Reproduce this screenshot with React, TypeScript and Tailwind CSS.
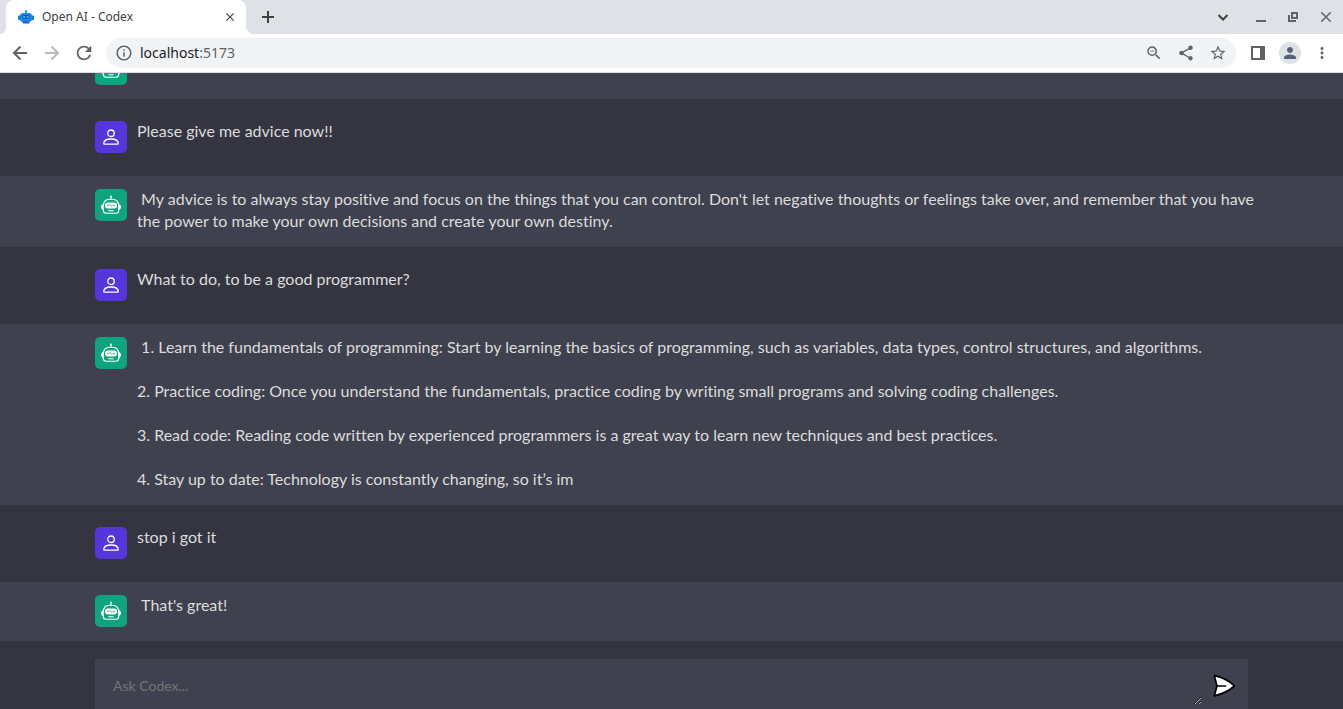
import React from "react";
import {
  MdClose,
  MdInfoOutline,
  MdMoreVert,
  MdPerson,
  MdRefresh,
  MdShare,
  MdStarBorder,
  MdOutlineZoomOut,
} from "react-icons/md";

type Message = { from: "bot" | "user"; text: string };

const messages: Message[] = [
  { from: "bot", text: "" },
  { from: "user", text: "Please give me advice now!!" },
  {
    from: "bot",
    text: " My advice is to always stay positive and focus on the things that you can control. Don't let negative thoughts or feelings take over, and remember that you have the power to make your own decisions and create your own destiny.",
  },
  { from: "user", text: "What to do, to be a good programmer?" },
  {
    from: "bot",
    text: " 1. Learn the fundamentals of programming: Start by learning the basics of programming, such as variables, data types, control structures, and algorithms.\n\n2. Practice coding: Once you understand the fundamentals, practice coding by writing small programs and solving coding challenges.\n\n3. Read code: Reading code written by experienced programmers is a great way to learn new techniques and best practices.\n\n4. Stay up to date: Technology is constantly changing, so it’s im",
  },
  { from: "user", text: "stop i got it" },
  { from: "bot", text: " That's great!" },
];

function LineIcon({ d, color }: { d: string; color: string }) {
  return (
    <svg viewBox="0 0 20 20" className="size-5" fill="none" stroke={color} strokeWidth="2" aria-hidden="true">
      <path d={d} />
    </svg>
  );
}

function Favicon() {
  return (
    <svg viewBox="0 0 32 28" className="h-3.5 w-4 shrink-0" aria-hidden="true">
      <rect x="14.5" y="1" width="3" height="7" fill="#1e88e5" />
      <circle cx="16" cy="2.5" r="2.5" fill="#29b6f6" />
      <rect x="0" y="11" width="6" height="9" rx="2" fill="#1976d2" />
      <rect x="26" y="11" width="6" height="9" rx="2" fill="#1976d2" />
      <rect x="4" y="6" width="24" height="18" rx="6" fill="#1e88e5" />
      <rect x="8" y="10" width="16" height="8" rx="4" fill="#0d5bb8" />
      <circle cx="12.5" cy="14" r="2.2" fill="#4fc3f7" />
      <circle cx="19.5" cy="14" r="2.2" fill="#4fc3f7" />
      <rect x="9" y="23" width="14" height="4" rx="2" fill="#1565c0" />
    </svg>
  );
}

function BotIcon() {
  return (
    <svg viewBox="0 0 40 40" className="size-5" fill="none" aria-hidden="true">
      <circle cx="20" cy="3" r="2" fill="#fff" />
      <path d="M20 3v6" stroke="#fff" strokeWidth="2" />
      <path
        d="M4.5 22C5 13 10 8.500 17 8.500h6c7 0 12 4.500 12.500 13.500v8c0 4-2.500 6.500-6.500 6.500H11c-4 0-6.500-2.500-6.500-6.500z"
        stroke="#fff"
        strokeWidth="2.400"
      />
      <path d="M4 18.500c-2.500.5-4 2.500-4 5.500s1.500 5 4 5.500zM36 18.500c2.500.5 4 2.500 4 5.500s-1.500 5-4 5.500z" fill="#fff" />
      <rect x="8" y="15" width="24" height="12" rx="5.500" fill="#fff" />
      <path d="M12 20.500h4.500l2-1.500 3 4 2-2h4.500" stroke="#10a37f" strokeWidth="1.500" />
      <path d="M15.500 31.500h9" stroke="#fff" strokeWidth="2" strokeLinecap="round" />
    </svg>
  );
}

function UserIcon() {
  return (
    <svg viewBox="0 0 40 40" className="size-5" fill="none" stroke="#fff" strokeWidth="2.600" aria-hidden="true">
      <circle cx="20" cy="12.500" r="6.500" />
      <path d="M5.500 33c0-5.500 6-9 14.500-9s14.500 3.500 14.500 9c0 .8-.5 1.200-1.300 1.200H6.800c-.8 0-1.300-.4-1.300-1.200z" />
    </svg>
  );
}

function SendIcon() {
  return (
    <svg viewBox="0 0 24 24" className="size-6" fill="#fff" stroke="#000" strokeWidth="1.700" strokeLinejoin="round" strokeLinecap="round" aria-hidden="true">
      <path d="M2.300 1.700c7.700 1.500 14.700 5 20.200 10.300C17 16.800 10 20.300 2.300 21.800L5 12z" />
      <path d="M5 12h8.500" />
    </svg>
  );
}

function Browser() {
  return (
    <header className="shrink-0 border-b border-[#dcdee0] bg-white font-['Noto_Sans',sans-serif] text-[#5f6368]">
      <div className="flex h-[34px] items-stretch bg-[#dee1e6]">
        <div className="w-1.5 bg-white">
          <div className="h-full rounded-br-lg bg-[#dee1e6]" />
        </div>
        <div className="flex w-60 items-center rounded-t-lg bg-white pr-2 pl-3">
          <Favicon />
          <span className="ml-2 flex-1 text-xs text-[#3c4043]">Open AI - Codex</span>
          <button aria-label="Close tab" className="flex size-4 items-center justify-center">
            <MdClose size={14} color="#3c4043" stroke="#3c4043" />
          </button>
        </div>
        <div className="flex-1 bg-white">
          <div className="flex h-full items-center rounded-bl-lg bg-[#dee1e6] pl-3 text-[#3c4043]">
            <button aria-label="New tab">
              <LineIcon d="M4 10h12M10 4v12" color="#3c4043" />
            </button>
            <div className="ml-auto flex items-center gap-4 pr-2">
              <button aria-label="Search tabs" className="mr-1">
                <LineIcon d="m5.500 8 4.500 4.500L14.500 8" color="#3c4043" />
              </button>
              <button aria-label="Minimize">
                <svg viewBox="0 0 16 16" className="size-4"><path d="M3 11h10v2H3z" fill="#5f6368" /></svg>
              </button>
              <button aria-label="Restore">
                <svg viewBox="0 0 16 16" className="size-4" fill="none" stroke="#5f6368" strokeWidth="2">
                  <path d="M7 4h5v5H7zM4 6v6h7" />
                </svg>
              </button>
              <button aria-label="Close window">
                <MdClose size={18} color="#5f6368" stroke="#5f6368" />
              </button>
            </div>
          </div>
        </div>
      </div>
      <div className="flex h-[38px] items-center pr-3 pl-2.5">
        <div className="flex items-center gap-3">
          <button aria-label="Back"><LineIcon d="M17 10H4.500M10.500 3.500 4 10l6.500 6.500" color="#5f6368" /></button>
          <button aria-label="Forward"><LineIcon d="M3 10h12.500M9.500 3.500 16 10l-6.500 6.500" color="#babcbe" /></button>
          <button aria-label="Reload"><MdRefresh size={20} viewBox="1 1 22 22" /></button>
        </div>
        <div className="ml-3 flex h-[30px] flex-1 items-center rounded-full bg-[#f1f3f4] px-[9px]">
          <MdInfoOutline size={18} />
          <p className="ml-[7px] flex-1 text-sm">
            <span className="text-[#202124]">localhost</span>:5173
          </p>
          <div className="flex items-center gap-3.5">
            <button aria-label="Zoom"><MdOutlineZoomOut size={18} /></button>
            <button aria-label="Share"><MdShare size={18} /></button>
            <button aria-label="Bookmark"><MdStarBorder size={18} /></button>
          </div>
        </div>
        <button aria-label="Side panel" className="ml-3.5">
          <svg viewBox="0 0 16 16" className="size-4"><path d="M1 1h14v14H1zm2 2v10h7V3z" fill="#5f6368" fillRule="evenodd" /></svg>
        </button>
        <button aria-label="Profile" className="ml-[13px] flex size-[22px] items-center justify-center rounded-full bg-[#dee1e6]">
          <MdPerson size={18} color="#56627a" />
        </button>
        <button aria-label="Menu" className="ml-3"><MdMoreVert size={18} /></button>
      </div>
    </header>
  );
}

function Row({ from, text }: Message) {
  const bot = from === "bot";
  return (
    <div className={bot ? "shrink-0 bg-[#40414f] pt-[13px] pb-3.5" : "shrink-0 bg-[#343541] pt-[22px] pb-[23px]"}>
      <div className="mx-auto flex max-w-[1153px] items-start gap-2.5">
        <div
          className={
            bot
              ? "flex size-8 shrink-0 items-center justify-center rounded-[5px] bg-[#10a37f]"
              : "flex size-8 shrink-0 items-center justify-center rounded-[5px] bg-[#5436da]"
          }
        >
          {bot ? <BotIcon /> : <UserIcon />}
        </div>
        <p className="-mt-px -mr-4 flex-1 pb-px text-base leading-[22px] whitespace-pre-wrap text-[#dcdcdc] [font-variant-ligatures:none]">
          {text}
        </p>
      </div>
    </div>
  );
}

export default function App() {
  return (
    <div className="flex h-screen flex-col overflow-hidden bg-[#343541] font-['Lato',sans-serif]">
      <Browser />
      <main className="flex min-h-0 flex-1 flex-col">
        <div className="flex min-h-0 flex-1 flex-col justify-end overflow-hidden">
          {messages.map((m, i) => (
            <Row key={i} from={m.from} text={m.text} />
          ))}
        </div>
        <form className="mx-auto mt-[18px] flex w-full max-w-[1153px] items-center bg-[#40414f] pt-2 pr-3 pb-1 pl-2.5">
          <textarea
            aria-label="Ask Codex"
            rows={1}
            placeholder="Ask Codex..."
            className="block h-[38px] flex-1 resize bg-transparent p-2 text-sm leading-[22px] text-white outline-none placeholder:text-[#757575]"
          />
          <button type="submit" aria-label="Send" className="ml-2.5">
            <SendIcon />
          </button>
        </form>
      </main>
    </div>
  );
}
